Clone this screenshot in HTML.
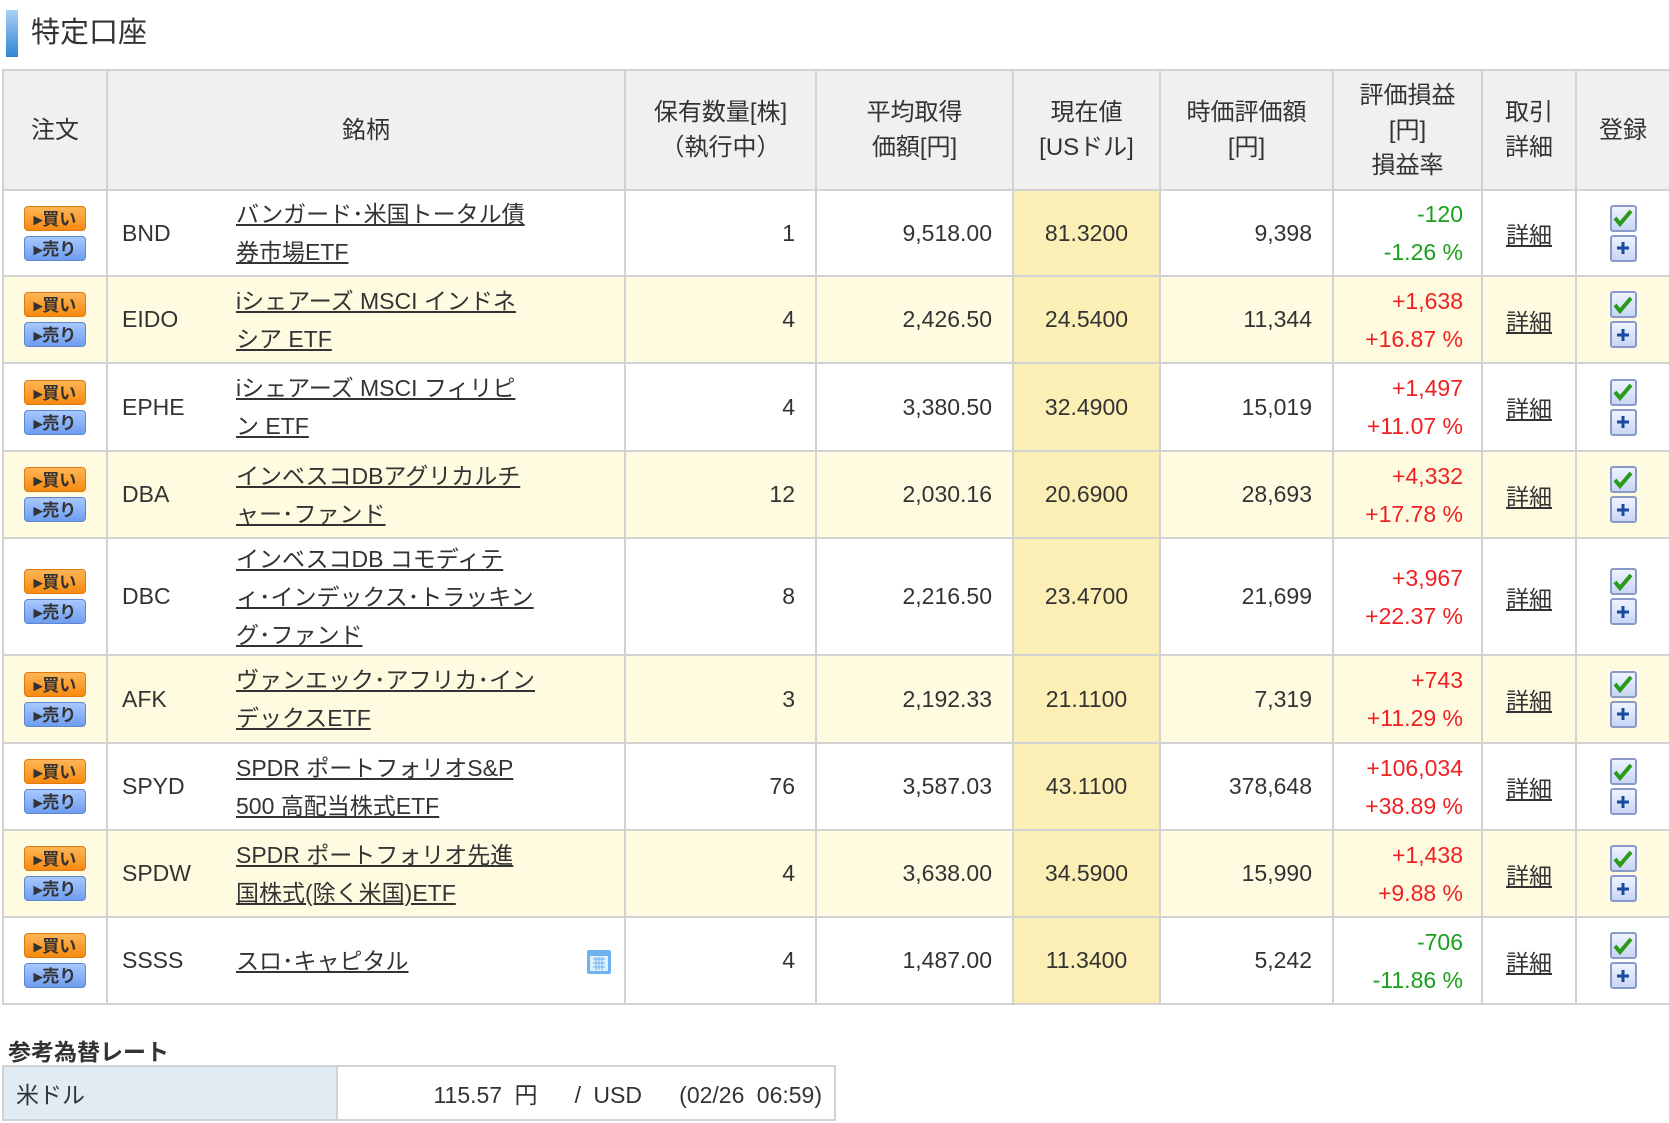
<!DOCTYPE html>
<html><head><meta charset="utf-8">
<style>
*{margin:0;padding:0;box-sizing:border-box}
body{width:1669px;height:1123px;background:#fff;font-family:"Liberation Sans","Noto Sans CJK JP",sans-serif;color:#222;position:relative;overflow:hidden}
.ttl{position:absolute;left:6px;top:10px;height:47px;width:12px;background:linear-gradient(#a9d0f5,#2f86d6)}
.ttlt{position:absolute;left:31px;top:13px;font-size:29px;line-height:40px;color:#333}
table.m{position:absolute;left:2px;top:69px;border-collapse:collapse;table-layout:fixed;width:1667px}
.m td,.m th{border:2px solid #d2d2d2;font-size:23px;font-weight:normal}
.m th{background:#f0f0f0;height:120px;text-align:center;line-height:35px;color:#333;font-size:24px}
.m td{vertical-align:middle;color:#333}
.m tr.y td{background:#fffbe1}
.m td.cp{background:#fbefb5!important;text-align:center}
.num{text-align:right;padding-right:20px}
.nm{padding-left:14px}
.nm div{display:flex;align-items:center}
.nm .cd{width:114px}
.nm a{color:#333;text-decoration:underline;line-height:38px;font-size:23px;width:300px}
.btn{display:block;width:62px;height:25px;margin:0 auto;border-radius:4px;font-size:17px;font-weight:bold;line-height:25px;text-align:center;color:#333}
.b1{background:linear-gradient(#ffb656,#f78a10);border:1px solid #e07a10;margin-bottom:5px}
.b2{background:linear-gradient(#a8c8ff,#6e9ef0);border:1px solid #5d87d0}
.pl{text-align:right;padding-right:18px;line-height:38px}
.m td.g{color:#1aa01a}.m td.r{color:#f02020}
.dt{text-align:center}.dt a{color:#333;text-decoration:underline}
.ic{width:27px;height:27px;margin:3px auto;border:2px solid #8a9ac8;border-radius:3px;background:linear-gradient(#eef3ff,#c8d6f5);display:flex;align-items:center;justify-content:center}
.fx{position:absolute;left:8px;top:1033px;font-size:23px;font-weight:bold;color:#333}
table.f{position:absolute;left:2px;top:1065px;border-collapse:collapse;width:834px}
.f td{border:2px solid #d2d2d2;height:54px;font-size:23px;color:#333}
</style></head><body>
<div class="ttl"></div><div class="ttlt">特定口座</div>
<table class="m">
<colgroup><col style="width:104px"><col style="width:518px"><col style="width:191px"><col style="width:197px"><col style="width:147px"><col style="width:173px"><col style="width:149px"><col style="width:94px"><col style="width:94px"></colgroup>
<tr><th>注文</th><th>銘柄</th><th>保有数量[株]<br>（執行中）</th><th>平均取得<br>価額[円]</th><th>現在値<br>[USドル]</th><th>時価評価額<br>[円]</th><th>評価損益<br>[円]<br>損益率</th><th>取引<br>詳細</th><th>登録</th></tr>
<tr style="height:86px"><td><span class="btn b1">▸買い</span><span class="btn b2">▸売り</span></td><td class="nm"><div><span class="cd">BND</span><a>バンガード･米国トータル債券市場ETF</a></div></td><td class="num">1</td><td class="num">9,518.00</td><td class="cp">81.3200</td><td class="num">9,398</td><td class="pl g">-120<br>-1.26 %</td><td class="dt"><a>詳細</a></td><td><div class="ic"><svg width="22" height="20"><path d="M3 10l5 6L19 3" stroke="#2a9a1a" stroke-width="4" fill="none"/></svg></div><div class="ic"><svg width="16" height="16"><path d="M8 2v12M2 8h12" stroke="#1a4aa0" stroke-width="3"/></svg></div></td></tr>
<tr class="y" style="height:87px"><td><span class="btn b1">▸買い</span><span class="btn b2">▸売り</span></td><td class="nm"><div><span class="cd">EIDO</span><a style="width:285px">iシェアーズ MSCI インドネシア ETF</a></div></td><td class="num">4</td><td class="num">2,426.50</td><td class="cp">24.5400</td><td class="num">11,344</td><td class="pl r">+1,638<br>+16.87 %</td><td class="dt"><a>詳細</a></td><td><div class="ic"><svg width="22" height="20"><path d="M3 10l5 6L19 3" stroke="#2a9a1a" stroke-width="4" fill="none"/></svg></div><div class="ic"><svg width="16" height="16"><path d="M8 2v12M2 8h12" stroke="#1a4aa0" stroke-width="3"/></svg></div></td></tr>
<tr style="height:88px"><td><span class="btn b1">▸買い</span><span class="btn b2">▸売り</span></td><td class="nm"><div><span class="cd">EPHE</span><a style="width:285px">iシェアーズ MSCI フィリピン ETF</a></div></td><td class="num">4</td><td class="num">3,380.50</td><td class="cp">32.4900</td><td class="num">15,019</td><td class="pl r">+1,497<br>+11.07 %</td><td class="dt"><a>詳細</a></td><td><div class="ic"><svg width="22" height="20"><path d="M3 10l5 6L19 3" stroke="#2a9a1a" stroke-width="4" fill="none"/></svg></div><div class="ic"><svg width="16" height="16"><path d="M8 2v12M2 8h12" stroke="#1a4aa0" stroke-width="3"/></svg></div></td></tr>
<tr class="y" style="height:87px"><td><span class="btn b1">▸買い</span><span class="btn b2">▸売り</span></td><td class="nm"><div><span class="cd">DBA</span><a>インベスコDBアグリカルチャー･ファンド</a></div></td><td class="num">12</td><td class="num">2,030.16</td><td class="cp">20.6900</td><td class="num">28,693</td><td class="pl r">+4,332<br>+17.78 %</td><td class="dt"><a>詳細</a></td><td><div class="ic"><svg width="22" height="20"><path d="M3 10l5 6L19 3" stroke="#2a9a1a" stroke-width="4" fill="none"/></svg></div><div class="ic"><svg width="16" height="16"><path d="M8 2v12M2 8h12" stroke="#1a4aa0" stroke-width="3"/></svg></div></td></tr>
<tr style="height:117px"><td><span class="btn b1">▸買い</span><span class="btn b2">▸売り</span></td><td class="nm"><div><span class="cd">DBC</span><a>インベスコDB コモディティ･インデックス･トラッキング･ファンド</a></div></td><td class="num">8</td><td class="num">2,216.50</td><td class="cp">23.4700</td><td class="num">21,699</td><td class="pl r">+3,967<br>+22.37 %</td><td class="dt"><a>詳細</a></td><td><div class="ic"><svg width="22" height="20"><path d="M3 10l5 6L19 3" stroke="#2a9a1a" stroke-width="4" fill="none"/></svg></div><div class="ic"><svg width="16" height="16"><path d="M8 2v12M2 8h12" stroke="#1a4aa0" stroke-width="3"/></svg></div></td></tr>
<tr class="y" style="height:88px"><td><span class="btn b1">▸買い</span><span class="btn b2">▸売り</span></td><td class="nm"><div><span class="cd">AFK</span><a>ヴァンエック･アフリカ･インデックスETF</a></div></td><td class="num">3</td><td class="num">2,192.33</td><td class="cp">21.1100</td><td class="num">7,319</td><td class="pl r">+743<br>+11.29 %</td><td class="dt"><a>詳細</a></td><td><div class="ic"><svg width="22" height="20"><path d="M3 10l5 6L19 3" stroke="#2a9a1a" stroke-width="4" fill="none"/></svg></div><div class="ic"><svg width="16" height="16"><path d="M8 2v12M2 8h12" stroke="#1a4aa0" stroke-width="3"/></svg></div></td></tr>
<tr style="height:87px"><td><span class="btn b1">▸買い</span><span class="btn b2">▸売り</span></td><td class="nm"><div><span class="cd">SPYD</span><a>SPDR ポートフォリオS&amp;P 500 高配当株式ETF</a></div></td><td class="num">76</td><td class="num">3,587.03</td><td class="cp">43.1100</td><td class="num">378,648</td><td class="pl r">+106,034<br>+38.89 %</td><td class="dt"><a>詳細</a></td><td><div class="ic"><svg width="22" height="20"><path d="M3 10l5 6L19 3" stroke="#2a9a1a" stroke-width="4" fill="none"/></svg></div><div class="ic"><svg width="16" height="16"><path d="M8 2v12M2 8h12" stroke="#1a4aa0" stroke-width="3"/></svg></div></td></tr>
<tr class="y" style="height:87px"><td><span class="btn b1">▸買い</span><span class="btn b2">▸売り</span></td><td class="nm"><div><span class="cd">SPDW</span><a style="width:290px">SPDR ポートフォリオ先進国株式(除く米国)ETF</a></div></td><td class="num">4</td><td class="num">3,638.00</td><td class="cp">34.5900</td><td class="num">15,990</td><td class="pl r">+1,438<br>+9.88 %</td><td class="dt"><a>詳細</a></td><td><div class="ic"><svg width="22" height="20"><path d="M3 10l5 6L19 3" stroke="#2a9a1a" stroke-width="4" fill="none"/></svg></div><div class="ic"><svg width="16" height="16"><path d="M8 2v12M2 8h12" stroke="#1a4aa0" stroke-width="3"/></svg></div></td></tr>
<tr style="height:87px"><td><span class="btn b1">▸買い</span><span class="btn b2">▸売り</span></td><td class="nm"><div><span class="cd">SSSS</span><a style="width:350px">スロ･キャピタル</a><svg width="26" height="28"><rect x="1" y="3" width="24" height="24" rx="2" fill="#6fb2ee"/><rect x="4" y="9" width="18" height="15" fill="#dcefff"/><path d="M7 12h12M7 16h12M7 20h12M10 10v13M13 10v13M16 10v13" stroke="#6fb2ee" stroke-width="1"/></svg></div></td><td class="num">4</td><td class="num">1,487.00</td><td class="cp">11.3400</td><td class="num">5,242</td><td class="pl g">-706<br>-11.86 %</td><td class="dt"><a>詳細</a></td><td><div class="ic"><svg width="22" height="20"><path d="M3 10l5 6L19 3" stroke="#2a9a1a" stroke-width="4" fill="none"/></svg></div><div class="ic"><svg width="16" height="16"><path d="M8 2v12M2 8h12" stroke="#1a4aa0" stroke-width="3"/></svg></div></td></tr>
</table>
<div class="fx">参考為替レート</div>
<table class="f"><tr><td style="width:334px;background:#e0ebf3;padding-left:12px">米ドル</td><td style="text-align:right;padding-right:12px;word-spacing:6px">115.57 円 &nbsp;&nbsp;/ USD &nbsp;&nbsp;(02/26 06:59)</td></tr></table>
</body></html>
